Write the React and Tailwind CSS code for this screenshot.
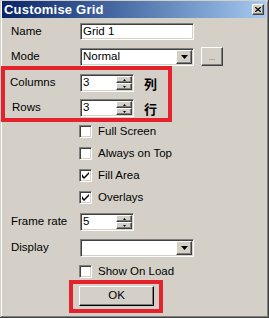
import React from 'react';

// Win98-style "Customise Grid" dialog

const FONT = { fontFamily: '"Liberation Sans", Arial, sans-serif' };

const sunken =
  'bg-white border border-t-[#808080] border-l-[#808080] border-r-white border-b-white shadow-[inset_1px_1px_0_#404040,inset_-1px_-1px_0_#d4d0c8]';
const raised =
  'bg-[#d4d0c8] border border-t-white border-l-white border-r-[#404040] border-b-[#404040] shadow-[inset_-1px_-1px_0_#808080]';

function Label({ children, className = 'w-[80px] pl-[11px]' }) {
  return <div className={`shrink-0 text-[11.5px] text-black ${className}`}>{children}</div>;
}

function TextField({ value, w = 'w-[114px]' }) {
  return (
    <div className={`${sunken} ${w} h-[17px] flex items-center pl-[2px] text-[11.5px] leading-none`}>
      {value}
    </div>
  );
}

function Select({ value }) {
  return (
    <div className={`${sunken} w-[114px] h-[18px] flex items-stretch p-[1px] text-[11.5px] leading-none`}>
      <div className="flex-1 flex items-center pl-[1px]">{value}</div>
      <div className={`${raised} w-[16px] flex items-center justify-center`}>
        <svg width="7" height="4" viewBox="0 0 7 4">
          <path d="M0 0h7L3.5 4z" fill="#000" />
        </svg>
      </div>
    </div>
  );
}

function Spinner({ value }) {
  return (
    <div className={`${sunken} w-[54px] h-[18px] flex items-stretch p-[1px] text-[11.5px] leading-none`}>
      <div className="flex-1 flex items-center pl-[1px]">{value}</div>
      <div className="w-[16px] flex flex-col">
        <div className={`${raised} flex-1 flex items-center justify-center`}>
          <svg width="3" height="2" viewBox="0 0 3 2">
            <path d="M1.5 0L3 2H0z" fill="#000" />
          </svg>
        </div>
        <div className={`${raised} flex-1 flex items-center justify-center`}>
          <svg width="3" height="2" viewBox="0 0 3 2">
            <path d="M0 0h3L1.5 2z" fill="#000" />
          </svg>
        </div>
      </div>
    </div>
  );
}

function Check({ label, checked, className = '' }) {
  return (
    <div className={`flex items-center h-[13px] ml-[79px] ${className}`}>
      <div className={`${sunken} w-[13px] h-[13px] flex items-center justify-center`}>
        {checked && (
          <svg width="7" height="7" viewBox="0 0 7 7">
            <path d="M0 2v3l2 2 5-5V-0L2 5z" fill="#000" />
          </svg>
        )}
      </div>
      <span className="ml-[6px] text-[11.5px] leading-none">{label}</span>
    </div>
  );
}

export default function App() {
  return (
    <div
      style={FONT}
      className="w-[269px] h-[318px] bg-[#d4d0c8] flex flex-col text-black shadow-[inset_-1px_-1px_0_#404040,inset_1px_1px_0_#d4d0c8,inset_-2px_-2px_0_#808080,inset_2px_2px_0_#fff]"
    >
      {/* title bar */}
      <div className="mt-[1px] ml-[2px] mr-[3px] h-[17px] flex items-center bg-gradient-to-r from-[#0a246a] to-[#a6caf0] pl-[2px] pr-[2px]">
        <span className="text-white font-bold text-[13px] tracking-[0.2px] leading-none">Customise Grid</span>
        <div className={`${raised} ml-auto w-[12px] h-[11px] flex items-center justify-center`}>
          <svg width="6" height="5" viewBox="0 0 6 5">
            <path d="M0 0l6 5M6 0L0 5" stroke="#000" strokeWidth="1.3" />
          </svg>
        </div>
      </div>

      <div className="flex items-center mt-[5px] h-[17px]">
        <Label>Name</Label>
        <TextField value="Grid 1" />
      </div>

      <div className="flex items-center mt-[7px] h-[19px]">
        <Label>Mode</Label>
        <Select value="Normal" />
        <div className={`${raised} ml-[7px] w-[22px] h-[19px] flex items-end justify-center pb-[3px] text-[8px] leading-none text-[#555]`}>
          ...
        </div>
      </div>

      {/* highlighted block */}
      <div className="ml-[1px] w-[171px] h-[56px] border-4 border-[#e3222b] flex flex-col">
        <div className="flex items-center mt-[4px] h-[18px]">
          <Label className="w-[75px] pl-[5px]">Columns</Label>
          <Spinner value="3" />
          <span className="ml-[10px] text-[13px] font-bold leading-none" style={{ fontFamily: '"Noto Sans CJK JP", sans-serif' }}>列</span>
        </div>
        <div className="flex items-center mt-[7px] h-[18px]">
          <Label className="w-[75px] pl-[7px]">Rows</Label>
          <Spinner value="3" />
          <span className="ml-[10px] text-[13px] font-bold leading-none" style={{ fontFamily: '"Noto Sans CJK JP", sans-serif' }}>行</span>
        </div>
      </div>

      <Check label="Full Screen" className="mt-[3px]" />
      <Check label="Always on Top" className="mt-[9px]" />
      <Check label="Fill Area" checked className="mt-[9px]" />
      <Check label="Overlays" checked className="mt-[9px]" />

      <div className="flex items-center mt-[9px] h-[18px]">
        <Label>Frame rate</Label>
        <Spinner value="5" />
      </div>

      <div className="flex items-center mt-[8px] h-[18px]">
        <Label>Display</Label>
        <Select value="" />
      </div>

      <Check label="Show On Load" className="mt-[8px]" />

      <div className="mt-[2px] ml-[69px] w-[94px] h-[33px] border-4 border-[#e3222b] pt-[2px] pl-[6px]">
        <div className="w-[75px] h-[20px] bg-[#d4d0c8] border border-t-white border-l-white border-r-black border-b-black shadow-[inset_-1px_-1px_0_#808080] flex items-center justify-center text-[11.5px] leading-none">
          OK
        </div>
      </div>
    </div>
  );
}
